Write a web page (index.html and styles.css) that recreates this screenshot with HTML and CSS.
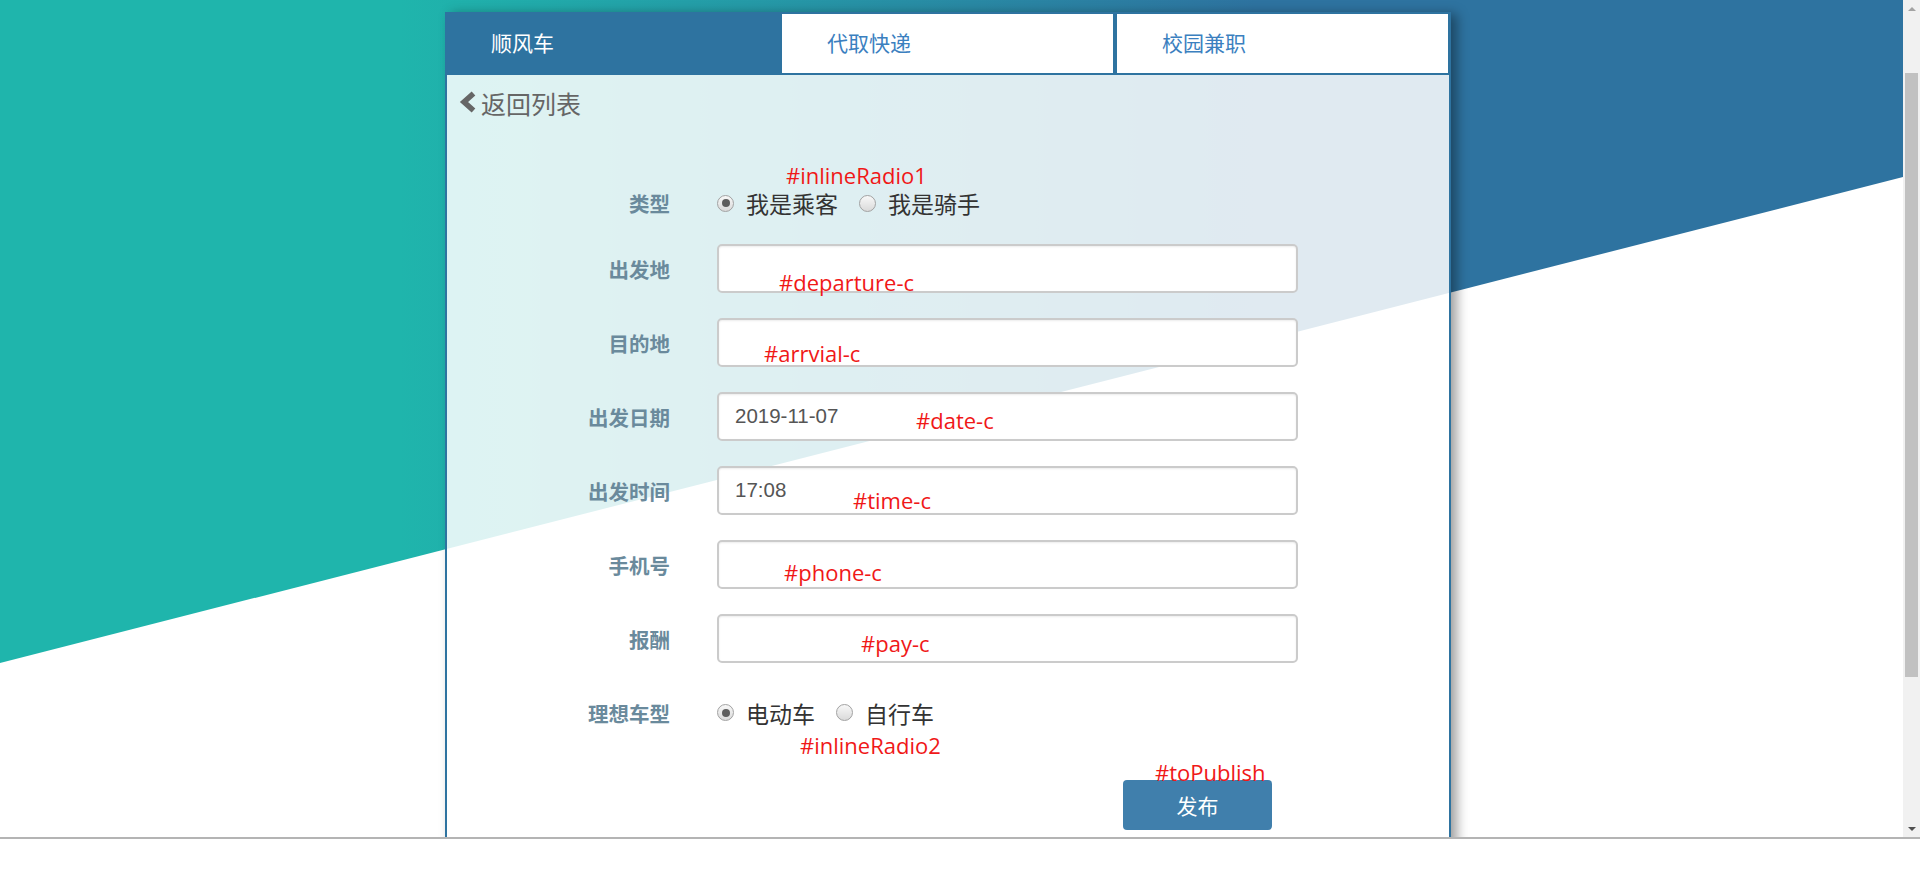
FILE: index.html
```html
<!DOCTYPE html>
<html lang="zh-CN">
<head>
<meta charset="utf-8">
<title>顺风车</title>
<link rel="stylesheet" href="styles.css">
</head>
<body>
<div class="screen">
  <div class="viewport">
    <div class="page">
      <div class="card">
        <div class="tabs">
          <div class="tab active">顺风车</div>
          <div class="tab">代取快递</div>
          <div class="tab last">校园兼职</div>
        </div>
        <div class="content">
          <div class="back">
            <svg class="chev" width="18" height="22" viewBox="0 0 18 22"><polyline points="14.5,2.5 5,11 14.5,19.5" fill="none" stroke="#666" stroke-width="5.5" stroke-linejoin="miter"/></svg>
            <span>返回列表</span>
          </div>
          <div class="form">
            <div class="row row-radio first">
              <div class="label">类型</div>
              <div class="radios">
                <span class="radio checked"></span><span class="rtext">我是乘客</span>
                <span class="radio"></span><span class="rtext">我是骑手</span>
              </div>
            </div>
            <div class="row"><div class="label">出发地</div><div class="input"></div></div>
            <div class="row"><div class="label">目的地</div><div class="input"></div></div>
            <div class="row"><div class="label">出发日期</div><div class="input"><span class="val">2019-11-07</span></div></div>
            <div class="row"><div class="label">出发时间</div><div class="input"><span class="val">17:08</span></div></div>
            <div class="row"><div class="label">手机号</div><div class="input"></div></div>
            <div class="row"><div class="label">报酬</div><div class="input"></div></div>
            <div class="row row-radio">
              <div class="label">理想车型</div>
              <div class="radios">
                <span class="radio checked"></span><span class="rtext">电动车</span>
                <span class="radio"></span><span class="rtext">自行车</span>
              </div>
            </div>
            <div class="row row-btn">
              <div></div>
              <div class="btnwrap"><div class="btn">发布</div></div>
            </div>
          </div>
        </div>
      </div>
      <span class="note n1">#inlineRadio1</span>
      <span class="note n2">#departure-c</span>
      <span class="note n3">#arrvial-c</span>
      <span class="note n4">#date-c</span>
      <span class="note n5">#time-c</span>
      <span class="note n6">#phone-c</span>
      <span class="note n7">#pay-c</span>
      <span class="note n8">#inlineRadio2</span>
      <span class="note n9">#toPublish</span>
    </div>
    <div class="scrollbar">
      <div class="arrow up"></div>
      <div class="track"><div class="thumb"></div></div>
      <div class="arrow down"></div>
    </div>
  </div>
  <div class="bottom"></div>
</div>
</body>
</html>
```
FILE: styles.css
```css
* { box-sizing: border-box; }
html, body { margin: 0; padding: 0; }
body {
  width: 1920px;
  height: 895px;
  overflow: hidden;
  background: #fff;
  font-family: "Noto Sans CJK SC", "Noto Sans", sans-serif;
}
.screen { display: flex; flex-direction: column; height: 895px; }
.viewport { display: flex; height: 837px; }
.page {
  position: relative;
  flex: 1;
  overflow: hidden;
  background: #fff;
}
.page::before {
  content: "";
  position: absolute;
  left: 0; top: 0; right: 0; bottom: 0;
  background: linear-gradient(to right, #1fb5ac 21%, #2e73a0 66%);
  clip-path: polygon(0 0, 100% 0, 100% 177px, 0 663px);
}
.card {
  position: relative;
  margin-left: 445px;
  margin-top: 12px;
  width: 1006px;
  height: 900px;
  border: 2px solid #2e73a0;
  border-bottom: none;
  box-shadow: 6px 2px 11px rgba(0,0,0,0.38);
}
.tabs {
  display: grid;
  grid-template-columns: 335px 335px 1fr;
  background: #2e73a0;
  padding-bottom: 2px;
}
.tab {
  height: 59px;
  line-height: 57px;
  padding-left: 45px;
  font-size: 21px;
  color: #3b80bf;
  background: #fff;
  margin-right: 4px;
}
.tab.last { margin-right: 1px; }
.tab.active { background: #2e73a0; color: #fff; margin-right: 0; padding-left: 44px; }
.content {
  background: rgba(255,255,255,0.85);
  height: 830px;
}
.back {
  display: flex;
  align-items: center;
  padding-left: 12px;
  padding-top: 10px;
  height: 45px;
  color: #666;
  font-size: 25px;
  line-height: 30px;
}
.chev { margin-right: 4px; margin-top: -2px; }
.form {
  display: flex;
  flex-direction: column;
  gap: 25px;
  padding-top: 69px;
}
.row {
  display: grid;
  grid-template-columns: 223px 581px;
  column-gap: 47px;
  align-items: center;
  height: 49px;
}
.row-radio.first { height: 28px; margin-bottom: 2px; }
.label {
  text-align: right;
  font-size: 20.5px;
  font-weight: bold;
  color: #6a8a9c;
  line-height: 28px;
}
.input {
  height: 49px;
  background: #fff;
  border: 2px solid #cbcbcb;
  border-radius: 5px;
  box-shadow: inset 0 1px 2px rgba(0,0,0,0.08);
  display: flex;
  align-items: center;
  padding-left: 16px;
}
.val {
  font-family: "Liberation Sans", Arial, sans-serif;
  font-size: 20.5px;
  color: #555;
  margin-top: -1px;
}
.radios {
  display: flex;
  align-items: center;
  height: 28px;
}
.radio {
  width: 17px;
  height: 17px;
  border-radius: 50%;
  border: 1px solid #a2a2a2;
  background: linear-gradient(#f8f8f8, #dadada);
  display: flex;
  align-items: center;
  justify-content: center;
  margin-right: 12px;
}
.radio.checked::after {
  content: "";
  width: 8px;
  height: 8px;
  border-radius: 50%;
  background: #5e5e5e;
}
.rtext {
  font-size: 23px;
  color: #333;
  line-height: 28px;
  margin-right: 21px;
}
.row-btn { margin-top: 18px; height: 50px; }
.btnwrap { display: flex; justify-content: flex-end; padding-right: 26px; }
.btn {
  width: 149px;
  height: 50px;
  border-radius: 4px;
  background: #407fac;
  color: #fff;
  font-size: 21px;
  line-height: 50px;
  text-align: center;
}
.note {
  position: absolute;
  font-family: "Open Sans", sans-serif;
  font-size: 22px;
  line-height: 24px;
  color: #f01818;
  white-space: nowrap;
}
.n1 { left: 786px; top: 163px; }
.n2 { left: 779px; top: 270px; }
.n3 { left: 764px; top: 341px; }
.n4 { left: 916px; top: 408px; }
.n5 { left: 853px; top: 488px; }
.n6 { left: 784px; top: 560px; }
.n7 { left: 861px; top: 631px; }
.n8 { left: 800px; top: 733px; }
.n9 { left: 1155px; top: 760px; }
.scrollbar {
  width: 17px;
  background: #f1f1f1;
  display: flex;
  flex-direction: column;
}
.arrow {
  height: 17px;
  display: flex;
  align-items: center;
  justify-content: center;
}
.arrow::after {
  content: "";
  width: 0; height: 0;
  border-left: 4px solid transparent;
  border-right: 4px solid transparent;
}
.arrow.up::after { border-bottom: 4px solid #a3a3a3; }
.arrow.down::after { border-top: 4px solid #505050; }
.track { flex: 1; padding-top: 56px; padding-bottom: 143px; }
.thumb { margin: 0 2px; height: 100%; background: #c1c1c1; }
.bottom {
  height: 58px;
  border-top: 2px solid #b4b4b4;
  background: #fff;
}
```
